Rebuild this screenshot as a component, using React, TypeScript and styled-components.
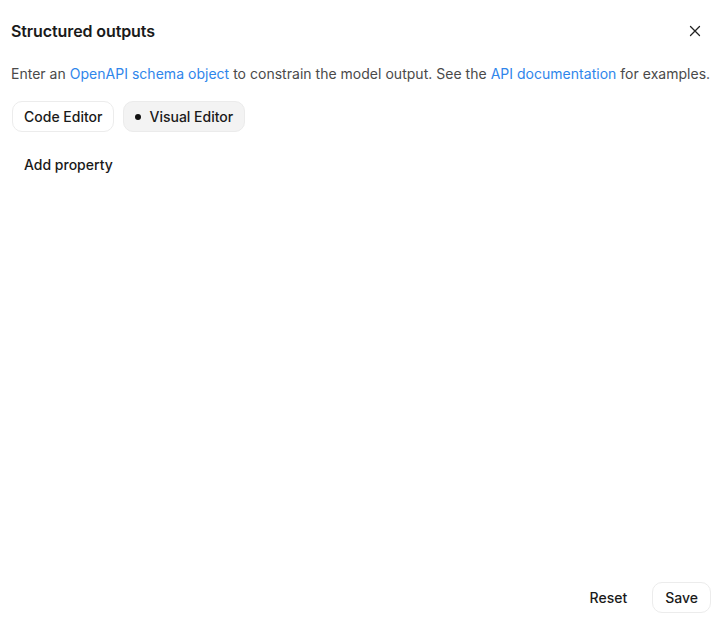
import React from "react";
import styled, { createGlobalStyle } from "styled-components";

const GlobalStyle = createGlobalStyle`
  html, body { margin: 0; padding: 0; background: #fff; }
  body { font-family: Inter, "Noto Sans", sans-serif; color: #1a1a1a; -webkit-font-smoothing: antialiased; }
  #root { height: 100vh; }
`;

const Panel = styled.div`
  height: 100vh;
  box-sizing: border-box;
  display: flex;
  flex-direction: column;
  padding: 18px 9px 14px 11px;
`;

const Header = styled.div`
  display: flex;
  align-items: center;
  justify-content: space-between;
  height: 26px;
`;

const Title = styled.h2`
  margin: 0;
  font-size: 16px;
  font-weight: 600;
  color: #1a1a1a;
  letter-spacing: -0.1px;
`;

const CloseButton = styled.button`
  width: 26px;
  height: 26px;
  display: flex;
  align-items: center;
  justify-content: center;
  border: none;
  background: transparent;
  padding: 0;
  margin-right: 3px;
  color: #222;
  cursor: pointer;
`;

const Description = styled.p`
  margin: 20px 0 0;
  font-size: 14px;
  line-height: 20px;
  color: #4a4a4a;
  letter-spacing: 0.02px;
`;

const Link = styled.a`
  color: #2f86eb;
  text-decoration: none;
`;

const Tabs = styled.div`
  display: flex;
  gap: 9px;
  margin-top: 17px;
  padding-left: 1px;
`;

const TabButton = styled.button<{ $active?: boolean }>`
  height: 31px;
  display: flex;
  align-items: center;
  gap: 8px;
  padding: 0 11px;
  border-radius: 10px;
  border: 1px solid ${(p) => (p.$active ? "#ebebeb" : "#ececec")};
  background: ${(p) => (p.$active ? "#f3f3f3" : "#fff")};
  font-family: inherit;
  font-size: 14px;
  font-weight: 500;
  color: #1a1a1a;
  cursor: pointer;
`;

const Dot = styled.span`
  width: 6px;
  height: 6px;
  border-radius: 50%;
  background: #111;
`;

const Body = styled.div`
  flex: 1;
  padding-top: 17px;
`;

const GhostButton = styled.button`
  height: 30px;
  padding: 0 12px;
  border: 1px solid transparent;
  background: transparent;
  font-family: inherit;
  font-size: 14px;
  font-weight: 500;
  color: #1a1a1a;
  cursor: pointer;
  border-radius: 10px;
`;

const Footer = styled.div`
  display: flex;
  justify-content: flex-end;
  align-items: center;
`;

const OutlineButton = styled(GhostButton)`
  border-color: #ececec;
  background: #fff;
  height: 31px;
  margin-left: 12px;
`;

export default function App() {
  return (
    <>
      <GlobalStyle />
      <Panel>
        <Header>
          <Title>Structured outputs</Title>
          <CloseButton aria-label="Close">
            <svg width="12" height="12" viewBox="0 0 12 12" fill="none">
              <path d="M1.5 1.5l9 9M10.5 1.5l-9 9" stroke="#222" strokeWidth="1.3" strokeLinecap="round" />
            </svg>
          </CloseButton>
        </Header>
        <Description>
          Enter an <Link href="#">OpenAPI schema object</Link> to constrain the model output. See the{" "}
          <Link href="#">API documentation</Link> for examples.
        </Description>
        <Tabs>
          <TabButton>Code Editor</TabButton>
          <TabButton $active>
            <Dot />
            Visual Editor
          </TabButton>
        </Tabs>
        <Body>
          <GhostButton>Add property</GhostButton>
        </Body>
        <Footer>
          <GhostButton>Reset</GhostButton>
          <OutlineButton>Save</OutlineButton>
        </Footer>
      </Panel>
    </>
  );
}
